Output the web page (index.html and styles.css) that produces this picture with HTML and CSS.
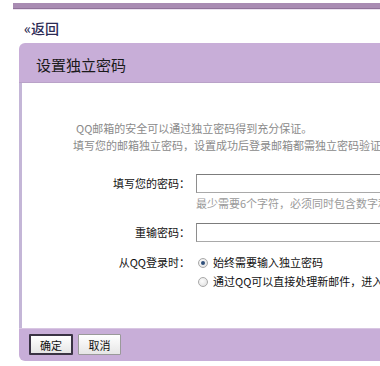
FILE: index.html
```html
<!DOCTYPE html>
<html lang="zh-CN">
<head>
<meta charset="utf-8">
<title>设置独立密码</title>
<link rel="stylesheet" href="styles.css">
</head>
<body>
<div class="page">
<div class="topbar"></div>
<div class="back"><a href="#">«返回</a></div>
<div class="panel">
  <div class="panel-head">设置独立密码</div>
  <div class="panel-body">
    <div class="intro">
      <p class="first">QQ邮箱的安全可以通过独立密码得到充分保证。</p>
      <p>填写您的邮箱独立密码，设置成功后登录邮箱都需独立密码验证，以确保邮箱安全。</p>
    </div>
    <div class="row row-pwd">
      <label class="label">填写您的密码：</label>
      <div class="field">
        <input class="input" type="password">
        <div class="hint">最少需要6个字符，必须同时包含数字和字母，不能与QQ密码相同。</div>
      </div>
    </div>
    <div class="row row-re">
      <label class="label">重输密码：</label>
      <div class="field">
        <input class="input" type="password">
      </div>
    </div>
    <div class="row row-qq">
      <span class="label">从QQ登录时：</span>
      <div class="field">
        <div class="opt"><span class="radio on"></span>始终需要输入独立密码</div>
        <div class="opt"><span class="radio"></span>通过QQ可以直接处理新邮件，进入邮箱设置等功能时需要独立密码</div>
      </div>
    </div>
  </div>
  <div class="panel-foot">
    <button class="btn btn-ok">确定</button>
    <button class="btn">取消</button>
  </div>
</div>
</div>
</body>
</html>
```

FILE: styles.css
```css
html, body {
  margin: 0;
  padding: 0;
  background: #fff;
}
body {
  font-family: "Noto Sans CJK SC", "Noto Sans", sans-serif;
  font-size: 11px;
  color: #111;
}
.page {
  width: 380px;
  height: 366px;
  overflow: hidden;
  padding-top: 3px;
  box-sizing: border-box;
}
.topbar {
  margin-left: 13px;
  height: 5px;
  background: #a98cb3;
  border-bottom: 1px solid #8f7299;
  box-shadow: 0 1px 0 #ece2f0;
}
.back {
  margin: 10px 0 0 24px;
  height: 18px;
  line-height: 18px;
  font-size: 14px;
}
.back a {
  color: #2c2c55;
  text-decoration: none;
  font-weight: 500;
}
.panel {
  margin: 6px 0 0 19px;
  width: 420px;
}
.panel-head {
  height: 40px;
  box-sizing: border-box;
  padding: 4px 0 0 17px;
  line-height: 35px;
  font-size: 15px;
  color: #1a1a1a;
  background: #c8aed8;
  border-radius: 6px 0 0 0;
  border-bottom: 1px solid #b9a2c8;
}
.panel-body {
  height: 245px;
  box-sizing: border-box;
  border-left: 3px solid #c4b6d7;
  background: #fff;
  padding-top: 37px;
}
.intro {
  padding-left: 51px;
  color: #8a8a8a;
  line-height: 17px;
  white-space: nowrap;
}
.intro p { margin: 0; }
.intro .first { text-indent: 3px; }
.row {
  display: grid;
  grid-template-columns: 168px 1fr;
  column-gap: 6px;
}
.label {
  text-align: right;
  line-height: 19px;
  color: #111;
  white-space: nowrap;
}
.row-pwd { margin-top: 19.5px; }
.row-re { margin-top: 12px; }
.row-qq { margin-top: 11.5px; }
.input {
  display: block;
  box-sizing: border-box;
  width: 240px;
  height: 19px;
  margin: 0;
  border: 1px solid #a9a9a9;
  border-top-color: #7c7c7c;
  border-left-color: #8e8e8e;
  background: #fff;
}
.hint {
  margin-top: 2px;
  line-height: 16px;
  color: #9a9a9a;
  white-space: nowrap;
}
.opt {
  display: flex;
  align-items: center;
  gap: 5px;
  padding-left: 2px;
  height: 19px;
  line-height: 19px;
  white-space: nowrap;
  color: #111;
}
.radio {
  width: 8px;
  height: 8px;
  border-radius: 50%;
  border: 1px solid #a8a8a8;
  background: radial-gradient(circle at 40% 40%, #fdfdfd, #dcdcdc);
  flex: none;
  position: relative;
}
.radio.on::after {
  content: "";
  position: absolute;
  left: 2px;
  top: 2px;
  width: 4px;
  height: 4px;
  border-radius: 50%;
  background: #2f4f7a;
}
.panel-foot {
  height: 33px;
  box-sizing: border-box;
  padding: 5px 0 0 10px;
  background: #c8aed8;
  border-top: 1px solid #d8c6e2;
  border-radius: 0 0 0 6px;
  display: flex;
  gap: 5px;
  align-items: flex-start;
}
.btn {
  box-sizing: border-box;
  width: 43px;
  height: 21px;
  margin: 0;
  padding: 0;
  font-family: "Noto Sans CJK SC", "Noto Sans", sans-serif;
  font-size: 11px;
  color: #111;
  background: linear-gradient(#ffffff, #e6e6e6);
  border: 1px solid #9a9a9a;
  border-radius: 1px;
}
.btn-ok {
  width: 44px;
  border: 2px solid #3a3344;
}
```
